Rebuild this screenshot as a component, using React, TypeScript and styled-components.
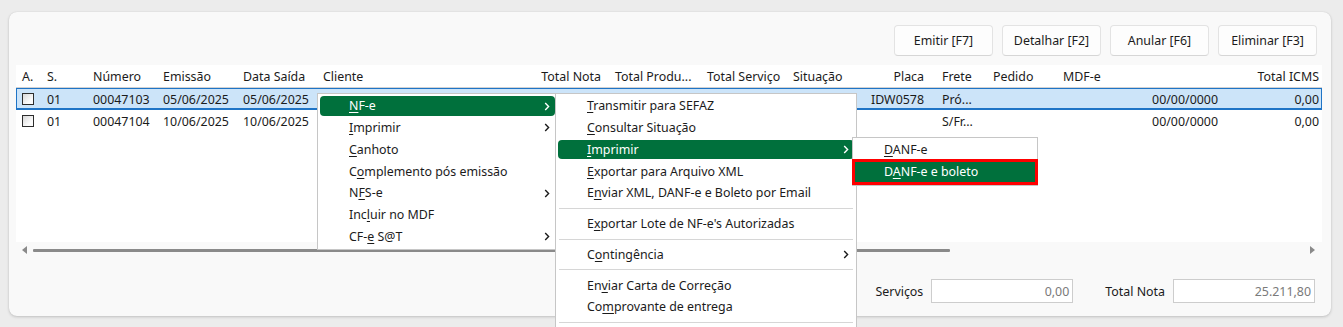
import React from 'react'
import styled, { createGlobalStyle } from 'styled-components'

const GlobalStyle = createGlobalStyle`
    html, body {
        margin: 0;
        padding: 0;
        overflow: hidden;
        background: #ececec;
    }
    body {
        font-family: 'Noto Sans', 'Open Sans', sans-serif;
        font-size: 12.4px;
        color: #1b1b1b;
    }
`

// colunas da grade: largura, alinhamento e recuo
type Col = { title: string; w: number; align?: 'left' | 'right'; pr?: number }

const columns: Col[] = [
    { title: 'A.', w: 25 },
    { title: 'S.', w: 46 },
    { title: 'Número', w: 70 },
    { title: 'Emissão', w: 80 },
    { title: 'Data Saída', w: 80 },
    { title: 'Cliente', w: 210 },
    { title: 'Total Nota', w: 82, align: 'right', pr: 8 },
    { title: 'Total Produ...', w: 92 },
    { title: 'Total Serviço', w: 86 },
    { title: 'Situação', w: 63 },
    { title: 'Placa', w: 86, align: 'right', pr: 12 },
    { title: 'Frete', w: 51 },
    { title: 'Pedido', w: 70 },
    { title: 'MDF-e', w: 73 },
    { title: '', w: 94, align: 'right', pr: 6 },
    { title: 'Total ICMS', w: 98, align: 'right', pr: 3 },
]

const rows = [
    {
        selected: true,
        cells: ['', '01', '00047103', '05/06/2025', '05/06/2025', '', '', '', '', '', 'IDW0578', 'Pró...', '', '', '00/00/0000', '0,00'],
    },
    {
        selected: false,
        cells: ['', '01', '00047104', '10/06/2025', '10/06/2025', '', '', '', '', '', '', 'S/Fr...', '', '', '00/00/0000', '0,00'],
    },
]

const template = columns.map((c) => `${c.w}px`).join(' ')

type Item =
    | { sep: true }
    | { sep?: false; pre: string; key: string; post: string; sub?: boolean; active?: boolean; marked?: boolean }

const menuMain: Item[] = [
    { pre: '', key: 'N', post: 'F-e', sub: true, active: true },
    { pre: '', key: 'I', post: 'mprimir', sub: true },
    { pre: '', key: 'C', post: 'anhoto' },
    { pre: 'C', key: 'o', post: 'mplemento pós emissão' },
    { pre: 'N', key: 'F', post: 'S-e', sub: true },
    { pre: 'Inc', key: 'l', post: 'uir no MDF' },
    { pre: 'CF-', key: 'e', post: ' S@T', sub: true },
]

const menuNfe: Item[] = [
    { pre: '', key: 'T', post: 'ransmitir para SEFAZ' },
    { pre: '', key: 'C', post: 'onsultar Situação' },
    { pre: '', key: 'I', post: 'mprimir', sub: true, active: true },
    { pre: '', key: 'E', post: 'xportar para Arquivo XML' },
    { pre: 'E', key: 'n', post: 'viar XML, DANF-e e Boleto por Email' },
    { sep: true },
    { pre: 'E', key: 'x', post: "portar Lote de NF-e's Autorizadas" },
    { sep: true },
    { pre: 'C', key: 'o', post: 'ntingência', sub: true },
    { sep: true },
    { pre: 'En', key: 'v', post: 'iar Carta de Correção' },
    { pre: 'Co', key: 'm', post: 'provante de entrega' },
    { sep: true },
]

const menuPrint: Item[] = [
    { pre: '', key: 'D', post: 'ANF-e' },
    { pre: 'D', key: 'A', post: 'NF-e e boleto', active: true, marked: true },
]

function Chevron() {
    return (
        <svg width="6" height="9" viewBox="0 0 6 9">
            <path d="M1.2 1 L4.6 4.5 L1.2 8" fill="none" stroke="currentColor" strokeWidth="1.4" />
        </svg>
    )
}

function ContextMenu({ items, x, y, w, z }: { items: Item[]; x: number; y: number; w: number; z: number }) {
    return (
        <Menu $x={x} $y={y} $w={w} $z={z}>
            {items.map((it, i) =>
                it.sep ? (
                    <Separator key={i} />
                ) : (
                    <MenuItem key={i} $active={!!it.active} $marked={!!it.marked}>
                        <MenuText>
                            {it.pre}
                            <Key>{it.key}</Key>
                            {it.post}
                        </MenuText>
                        {it.sub && (
                            <Arrow>
                                <Chevron />
                            </Arrow>
                        )}
                    </MenuItem>
                ),
            )}
        </Menu>
    )
}

export default function App() {
    return (
        <>
            <GlobalStyle />
            <Page>
                <Panel>
                    <Toolbar>
                        <ActionButton>Emitir [F7]</ActionButton>
                        <ActionButton>Detalhar [F2]</ActionButton>
                        <ActionButton>Anular [F6]</ActionButton>
                        <ActionButton>Eliminar [F3]</ActionButton>
                    </Toolbar>

                    <Grid>
                        <HeaderRow>
                            {columns.map((c, i) => (
                                <Cell key={i} $align={c.align} $pr={c.pr}>
                                    {c.title}
                                </Cell>
                            ))}
                        </HeaderRow>
                        {rows.map((r, ri) => (
                            <Row key={ri} $selected={r.selected}>
                                {r.cells.map((v, ci) => (
                                    <Cell key={ci} $align={columns[ci].align} $pr={columns[ci].pr}>
                                        {ci === 0 ? <Check /> : v}
                                    </Cell>
                                ))}
                            </Row>
                        ))}
                    </Grid>

                    <ScrollBar>
                        <ArrowLeft />
                        <Thumb />
                        <ArrowRight />
                    </ScrollBar>

                    <Footer>
                        <Field>
                            <Label>Serviços</Label>
                            <ValueBox>0,00</ValueBox>
                        </Field>
                        <Field>
                            <Label>Total Nota</Label>
                            <ValueBox>25.211,80</ValueBox>
                        </Field>
                    </Footer>
                </Panel>

                <ContextMenu items={menuMain} x={317} y={93} w={241} z={1} />
                <ContextMenu items={menuNfe} x={555} y={93} w={302} z={2} />
                <ContextMenu items={menuPrint} x={852} y={137} w={186} z={3} />
            </Page>
        </>
    )
}

const Page = styled.div`
    position: relative;
    height: 327px;
    box-sizing: border-box;
    padding: 12px 12px 11px 9px;
`

const Panel = styled.div`
    display: flex;
    flex-direction: column;
    height: 100%;
    box-sizing: border-box;
    padding: 13px 9px 0 7px;
    background: #f9f9f9;
    border-radius: 8px;
    box-shadow: 0 1px 3px rgba(0, 0, 0, 0.18), 0 0 1px rgba(0, 0, 0, 0.12);
`

const Toolbar = styled.div`
    display: flex;
    justify-content: flex-end;
    gap: 9px;
    padding-right: 5px;
    margin-bottom: 9px;
`

const ActionButton = styled.button`
    width: 99px;
    height: 31px;
    padding: 0;
    font: inherit;
    color: #1b1b1b;
    background: #fdfdfd;
    border: 1px solid #e3e3e3;
    border-bottom-color: #d6d6d6;
    border-radius: 4px;
`

const Grid = styled.div`
    height: 177px;
    background: #fff;
`

const HeaderRow = styled.div`
    display: grid;
    grid-template-columns: ${template};
    height: 23px;
    align-items: center;
    border-bottom: 1px solid #d2d2d2;
    box-sizing: border-box;
`

const Row = styled.div<{ $selected: boolean }>`
    display: grid;
    grid-template-columns: ${template};
    height: 22px;
    align-items: center;
    box-sizing: border-box;
    background: ${({ $selected }) => ($selected ? '#cce4f9' : '#fff')};
    box-shadow: ${({ $selected }) => ($selected ? 'inset 0 0 0 1px #1f74c6, inset 0 -2px 0 #1f74c6' : 'none')};
`

const Cell = styled.div<{ $align?: 'left' | 'right'; $pr?: number }>`
    padding: 0 ${({ $pr }) => $pr ?? 6}px 0 6px;
    white-space: nowrap;
    overflow: hidden;
    display: flex;
    justify-content: ${({ $align }) => ($align === 'right' ? 'flex-end' : 'flex-start')};
`

const Check = styled.span`
    display: block;
    width: 12px;
    height: 12px;
    box-sizing: border-box;
    border: 1px solid #2d2d2d;
    background: linear-gradient(135deg, #d8d8d8, #fbfbfb 70%);
`

const ScrollBar = styled.div`
    display: flex;
    align-items: center;
    height: 16px;
    padding: 0 7px 0 6px;
`

const ArrowLeft = styled.span`
    width: 0;
    height: 0;
    border-top: 4px solid transparent;
    border-bottom: 4px solid transparent;
    border-right: 5px solid #8a8a8a;
`

const ArrowRight = styled.span`
    margin-left: auto;
    width: 0;
    height: 0;
    border-top: 4px solid transparent;
    border-bottom: 4px solid transparent;
    border-left: 5px solid #8a8a8a;
`

const Thumb = styled.span`
    margin-left: 6px;
    width: 917px;
    height: 3px;
    background: #8a8a8a;
    border-radius: 1px;
`

const Footer = styled.div`
    display: flex;
    justify-content: flex-end;
    gap: 32px;
    margin-top: 21px;
    padding-right: 7px;
`

const Field = styled.div`
    display: flex;
    align-items: center;
    gap: 8px;
`

const Label = styled.span`
    color: #1b1b1b;
`

const ValueBox = styled.div`
    width: 142px;
    height: 24px;
    box-sizing: border-box;
    padding-right: 3px;
    display: flex;
    align-items: center;
    justify-content: flex-end;
    background: #fff;
    border: 1px solid #cdcdcd;
    color: #7a7a7a;
`

const Menu = styled.div<{ $x: number; $y: number; $w: number; $z: number }>`
    position: absolute;
    left: ${({ $x }) => $x}px;
    top: ${({ $y }) => $y}px;
    width: ${({ $w }) => $w}px;
    z-index: ${({ $z }) => $z};
    display: flex;
    flex-direction: column;
    box-sizing: border-box;
    padding: 1px 2px 2px;
    background: #fff;
    border: 1px solid #c6c6c6;
`

const MenuItem = styled.div<{ $active: boolean; $marked: boolean }>`
    position: relative;
    height: 19.75px;
    margin: 1px 0;
    padding-left: 29px;
    display: flex;
    align-items: center;
    border-radius: ${({ $marked }) => ($marked ? '0' : '4px')};
    color: ${({ $active }) => ($active ? '#fff' : '#1b1b1b')};
    background: ${({ $active }) => ($active ? '#00703c' : 'transparent')};
    outline: ${({ $marked }) => ($marked ? '3px solid #f00' : 'none')};
`

const MenuText = styled.span`
    white-space: pre;
`

const Key = styled.span`
    text-decoration: underline;
    text-underline-offset: 2px;
`

const Arrow = styled.span`
    position: absolute;
    right: 5px;
    top: 5.5px;
    display: flex;
`

const Separator = styled.div`
    height: 9px;
    display: flex;
    align-items: center;

    &::after {
        content: '';
        flex: 1;
        margin: 0 1px;
        height: 1px;
        background: #d6d6d6;
    }
`
